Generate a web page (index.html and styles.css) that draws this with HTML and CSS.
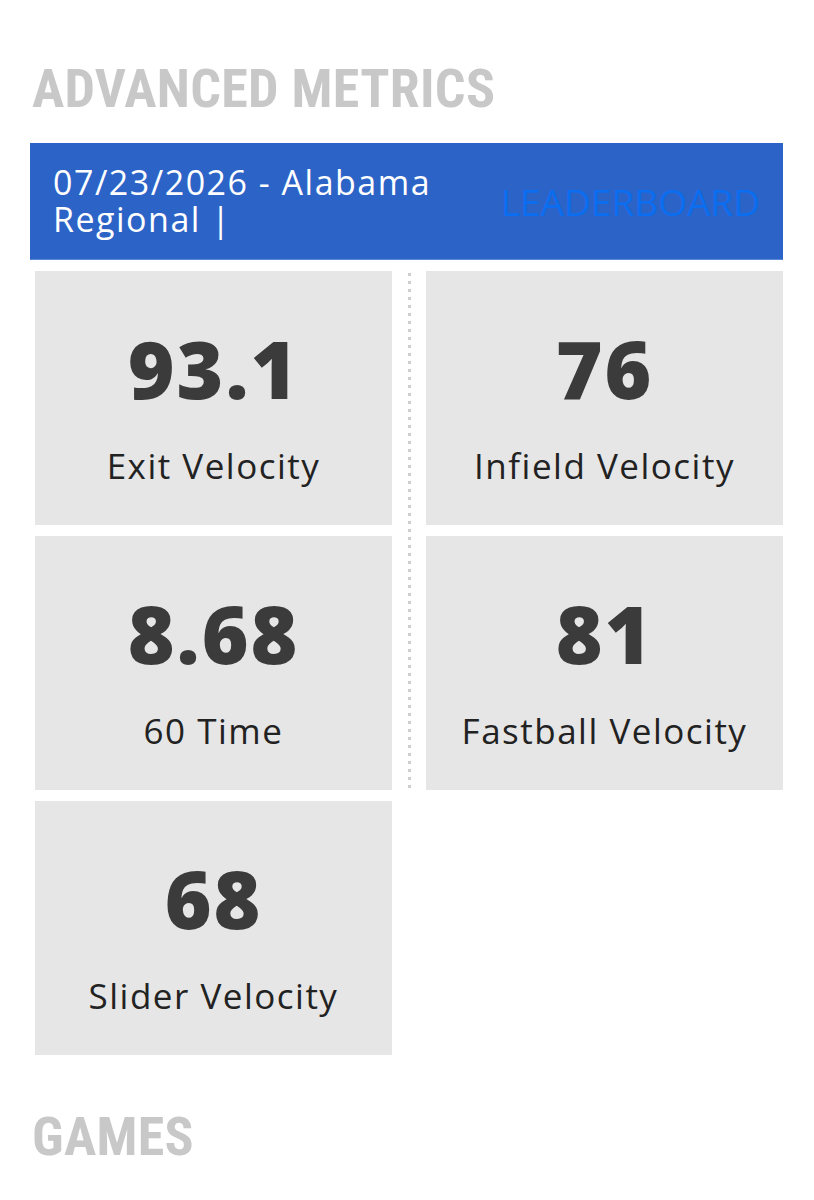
FILE: index.html
```html
<!DOCTYPE html>
<html>
<head>
	<meta charset="utf-8">
	<title>Advanced Metrics</title>
	<link rel="stylesheet" href="styles.css">
</head>
<body>
	<div class="page">
		<h2 class="section-title">ADVANCED METRICS</h2>
		<div class="event-bar">
			<div class="event-name">07/23/2026 - Alabama Regional |</div>
			<a class="leaderboard" href="#">LEADERBOARD</a>
		</div>
		<div class="metrics">
			<div class="col col-left">
				<div class="card">
					<div class="value">93.1</div>
					<div class="label">Exit Velocity</div>
				</div>
				<div class="card">
					<div class="value">8.68</div>
					<div class="label">60 Time</div>
				</div>
				<div class="card">
					<div class="value">68</div>
					<div class="label">Slider Velocity</div>
				</div>
			</div>
			<div class="col col-right">
				<div class="card">
					<div class="value">76</div>
					<div class="label">Infield Velocity</div>
				</div>
				<div class="card">
					<div class="value">81</div>
					<div class="label">Fastball Velocity</div>
				</div>
			</div>
		</div>
		<h2 class="section-title games">GAMES</h2>
	</div>
</body>
</html>
```

FILE: styles.css
```css
*{
	margin:0;
	padding:0;
	box-sizing:border-box;
}
body{
	background:#fff;
	font-family:"Open Sans","Noto Sans",sans-serif;
}
.page{
	padding:62px 31px 0 30px;
}
.section-title{
	font-family:Roboto,"Liberation Sans",sans-serif;
	font-weight:700;
	font-stretch:condensed;
	font-size:54px;
	line-height:54px;
	letter-spacing:0.3px;
	color:#c8c8c8;
	padding-left:2px;
	margin-bottom:27px;
}
.section-title.games{
	margin-top:55px;
}
.event-bar{
	background:#2c63c7;
	border-bottom:1px solid #5b86d6;
	height:117px;
	display:flex;
	align-items:center;
	justify-content:space-between;
	padding:0 23px;
}
.event-name{
	color:#fff;
	font-size:34px;
	line-height:37px;
	letter-spacing:1.5px;
	width:420px;
}
.leaderboard{
	color:#0b6df0;
	font-size:37px;
	text-decoration:none;
}
.metrics{
	display:flex;
	align-items:flex-start;
	margin-top:11px;
	padding-left:5px;
}
.col{
	display:flex;
	flex-direction:column;
	gap:11px;
	width:357px;
}
.col-right{
	width:391px;
	padding-left:34px;
	background:linear-gradient(#cfcfcf 0 3px,transparent 3px 8px) 16px 2px / 3px 8px repeat-y;
}
.card{
	background:#e6e6e6;
	height:254px;
	text-align:center;
	padding-top:57px;
}
.value{
	font-size:80px;
	line-height:80px;
	font-weight:800;
	letter-spacing:2px;
	color:#3b3b3b;
}
.label{
	font-size:35px;
	line-height:40px;
	font-weight:500;
	letter-spacing:1.5px;
	margin-top:38px;
	color:#222;
}
```
